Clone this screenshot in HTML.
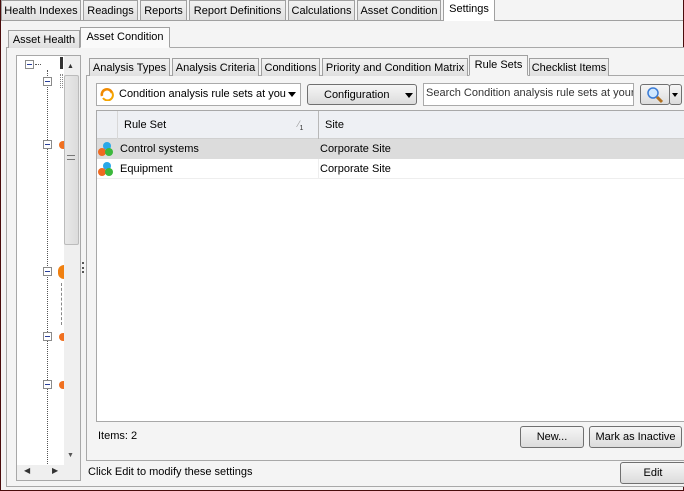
<!DOCTYPE html>
<html><head><style>
*{box-sizing:border-box;margin:0;padding:0}
body{width:684px;height:491px;overflow:hidden;background:#f4f4f4;font:11px "Liberation Sans",sans-serif;color:#000;position:relative}
.a{position:absolute;white-space:nowrap}
.tab{position:absolute;height:20px;border:1px solid #a0a0a0;border-bottom:none;background:linear-gradient(#f2f2f2,#e0e0e0);padding:4px 0 0;text-align:center;white-space:nowrap;overflow:hidden}
.sel{background:#fff}
.btn{position:absolute;border:1px solid #707070;border-radius:3px;background:linear-gradient(#f6f6f6,#dcdcdc);text-align:center;padding-top:4px;white-space:nowrap}
.mn{position:absolute;width:9px;height:9px;border:1px solid #8a8a8a;background:#fff}
.mn:after{content:"";position:absolute;left:1px;top:3px;width:5px;height:1px;background:#2a3f9a}
</style></head><body>
<div class="a" style="left:0;top:0;width:684px;height:491px;border:1px solid #4a0c0c;border-top:none"></div>
<div class="a" style="left:1px;top:20px;width:682px;height:1px;background:#a0a0a0"></div>
<div class="tab" style="left:1px;top:0;width:80px">Health Indexes</div>
<div class="tab" style="left:83px;top:0;width:55px">Readings</div>
<div class="tab" style="left:140px;top:0;width:47px">Reports</div>
<div class="tab" style="left:189px;top:0;width:97px">Report Definitions</div>
<div class="tab" style="left:288px;top:0;width:67px">Calculations</div>
<div class="tab" style="left:357px;top:0;width:84px">Asset Condition</div>
<div class="tab sel" style="left:443px;top:-2px;width:52px;height:23px;padding-top:4px">Settings</div>

<div class="a" style="left:6px;top:47px;width:680px;height:440px;border:1px solid #a8a8a8;background:#f4f4f4"></div>
<div class="tab" style="left:8px;top:30px;width:72px;height:18px;padding-top:3px">Asset Health</div>
<div class="tab sel" style="left:80px;top:27px;width:90px;height:21px;padding-top:3px;background:#fafafa;border-bottom:1px solid #fafafa">Asset Condition</div>

<div class="a" style="left:16px;top:55px;width:65px;height:426px;border:1px solid #a8a8a8;background:#fff"></div>
<div class="a" style="left:64px;top:56px;width:16px;height:409px;background:#efefef"></div>
<div class="a" style="left:64px;top:75px;width:15px;height:170px;border:1px solid #bbb;border-radius:2px;background:linear-gradient(90deg,#e8e8e8,#dcdcdc)"></div>
<div class="a" style="left:67px;top:155px;width:8px;height:5px;border-top:1px solid #777;border-bottom:1px solid #777"></div>
<div class="a" style="left:67px;top:63px;font-size:7px;color:#333">▲</div>
<div class="a" style="left:67px;top:452px;font-size:7px;color:#555">▼</div>
<div class="a" style="left:17px;top:465px;width:63px;height:15px;background:#efefef"></div>
<div class="a" style="left:24px;top:466px;font-size:8px;color:#333">◀</div>
<div class="a" style="left:52px;top:466px;font-size:8px;color:#333">▶</div>
<div class="a" style="left:47px;top:70px;width:0;height:394px;border-left:1px dotted #555"></div>
<div class="mn" style="left:25px;top:60px"></div><div class="a" style="left:35px;top:64px;width:6px;border-top:1px dotted #555"></div>
<div class="a" style="left:60px;top:57px;width:3px;height:12px;background:#333"></div>
<div class="mn" style="left:43px;top:77px"></div>
<div class="a" style="left:60px;top:74px;width:3px;height:14px;border:1px dotted #888"></div>
<div class="mn" style="left:43px;top:140px"></div><div class="a" style="left:59px;top:141px;width:5px;height:8px;background:#f07020;border-radius:4px 0 0 4px"></div>
<div class="mn" style="left:43px;top:267px"></div><div class="a" style="left:58px;top:265px;width:6px;height:14px;background:#f08010;border-radius:7px 0 0 7px"></div>
<div class="a" style="left:61px;top:283px;width:0;height:42px;border-left:1px dashed #888"></div>
<div class="mn" style="left:43px;top:332px"></div><div class="a" style="left:59px;top:333px;width:5px;height:8px;background:#f07020;border-radius:4px 0 0 4px"></div>
<div class="mn" style="left:43px;top:380px"></div><div class="a" style="left:59px;top:381px;width:5px;height:8px;background:#f07020;border-radius:4px 0 0 4px"></div>
<div class="a" style="left:82px;top:262px;width:2px;height:11px;border-left:2px dotted #555"></div>

<div class="a" style="left:86px;top:75px;width:600px;height:386px;border:1px solid #a8a8a8;background:#f4f4f4"></div>
<div class="tab" style="left:89px;top:58px;width:81px;height:18px;padding-top:3px">Analysis Types</div>
<div class="tab" style="left:172px;top:58px;width:87px;height:18px;padding-top:3px">Analysis Criteria</div>
<div class="tab" style="left:261px;top:58px;width:59px;height:18px;padding-top:3px">Conditions</div>
<div class="tab" style="left:322px;top:58px;width:146px;height:18px;padding-top:3px">Priority and Condition Matrix</div>
<div class="tab sel" style="left:469px;top:55px;width:59px;height:21px;padding-top:3px;background:#f4f4f4;border-bottom:1px solid #f4f4f4">Rule Sets</div>
<div class="tab" style="left:529px;top:58px;width:80px;height:18px;padding-top:3px">Checklist Items</div>

<div class="a" style="left:96px;top:83px;width:205px;height:23px;border:1px solid #aaa;background:#fff;padding:4px 0 0 22px;overflow:hidden">Condition analysis rule sets at you</div>
<svg class="a" style="left:99px;top:87px" width="16" height="14"><path d="M3 9 A5 5 0 1 1 13 6" stroke="#f08a00" stroke-width="2.5" fill="none"/><path d="M13 5 A5 5 0 0 1 4 11" stroke="#f5a500" stroke-width="2" fill="none"/></svg>
<div class="a" style="left:287px;top:92px;width:12px;height:10px;background:#fff"></div>
<div class="a" style="left:288px;top:92px;border:4px solid transparent;border-top:5px solid #000"></div>
<div class="btn" style="left:307px;top:84px;width:110px;height:21px;text-align:left;padding-left:16px">Configuration</div>
<div class="a" style="left:405px;top:93px;border:4px solid transparent;border-top:5px solid #000"></div>
<div class="a" style="left:423px;top:83px;width:211px;height:23px;border:1px solid #aaa;background:#fff;padding:3px 0 0 2px;overflow:hidden;color:#333">Search Condition analysis rule sets at your</div>
<div class="btn" style="left:640px;top:84px;width:30px;height:21px"></div>
<div class="btn" style="left:669px;top:84px;width:13px;height:21px"></div>
<div class="a" style="left:672px;top:93px;border:3px solid transparent;border-top:4px solid #000"></div>
<svg class="a" style="left:646px;top:86px" width="18" height="18"><circle cx="7" cy="7" r="5" fill="#cfe8ff" stroke="#3a7bd5" stroke-width="1.5"/><path d="M11 11 L16 16" stroke="#b07020" stroke-width="3"/></svg>

<div class="a" style="left:96px;top:110px;width:590px;height:312px;border:1px solid #a8a8a8;background:#fff"></div>
<div class="a" style="left:97px;top:111px;width:587px;height:28px;background:#eef0f4;border-bottom:1px solid #d0d0d0"></div>
<div class="a" style="left:117px;top:111px;width:1px;height:28px;background:#d8d8d8"></div>
<div class="a" style="left:318px;top:111px;width:1px;height:28px;background:#b8b8b8"></div>
<div class="a" style="left:124px;top:119px">Rule Set</div>
<div class="a" style="left:298px;top:119px;font-size:9px;color:#999">⁄<sub style="font-size:7px;color:#333">1</sub></div>
<div class="a" style="left:325px;top:119px">Site</div>
<div class="a" style="left:97px;top:139px;width:587px;height:20px;background:#dcdcdc"></div>
<div class="a" style="left:97px;top:159px;width:587px;height:20px;border-bottom:1px solid #eee"></div>
<div class="a" style="left:318px;top:159px;width:1px;height:20px;background:#eee"></div>
<div class="a" style="left:120px;top:143px">Control systems</div><div class="a" style="left:320px;top:143px">Corporate Site</div>
<div class="a" style="left:120px;top:163px">Equipment</div><div class="a" style="left:320px;top:163px">Corporate Site</div>
<svg class="a" style="left:97px;top:141px" width="18" height="16"><circle cx="10" cy="5" r="4" fill="#29a8e8"/><circle cx="5" cy="11" r="4" fill="#f06a20"/><circle cx="12" cy="11" r="4" fill="#3cb83c"/></svg>
<svg class="a" style="left:97px;top:161px" width="18" height="16"><circle cx="10" cy="5" r="4" fill="#29a8e8"/><circle cx="5" cy="11" r="4" fill="#f06a20"/><circle cx="12" cy="11" r="4" fill="#3cb83c"/></svg>

<div class="a" style="left:98px;top:430px">Items: 2</div>
<div class="btn" style="left:520px;top:426px;width:64px;height:22px">New...</div>
<div class="btn" style="left:589px;top:426px;width:93px;height:22px">Mark as Inactive</div>
<div class="a" style="left:88px;top:466px">Click Edit to modify these settings</div>
<div class="btn" style="left:620px;top:462px;width:66px;height:22px">Edit</div>
</body></html>
